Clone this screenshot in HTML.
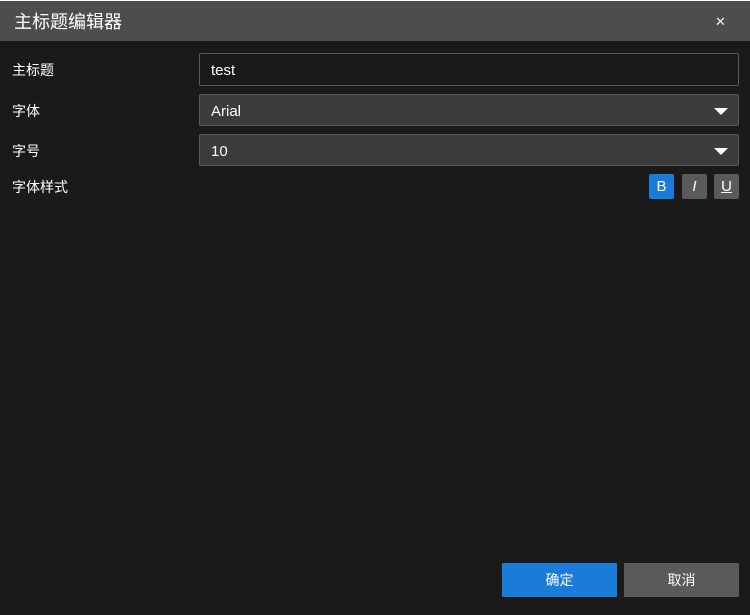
<!DOCTYPE html>
<html><head><meta charset="utf-8"><style>
*{margin:0;padding:0;box-sizing:border-box}
body{width:750px;height:615px;background:#1a1a1a;font-family:"Liberation Sans","Noto Sans CJK SC",sans-serif;color:#fff;position:relative;overflow:hidden}
.top{position:absolute;left:0;top:0;width:750px;height:1px;background:#fff}
.tb{position:absolute;left:0;top:1px;width:750px;height:40px;background:#4d4d4d}
.tb .t{position:absolute;left:14px;top:10px;font-size:18px;line-height:22px}
.tb .x{position:absolute;left:715px;top:14px;font-size:13px;line-height:14px;color:#eee}
.lbl{position:absolute;left:12px;font-size:14px;line-height:18px}
.f{position:absolute;left:199px;width:540px;border:1px solid #5a5a5a;border-radius:2px;font-size:15px;padding-left:11px}
.sel{background:#3c3c3c}
.sel:after{content:"";position:absolute;right:10px;top:13px;border-left:7px solid transparent;border-right:7px solid transparent;border-top:7px solid #fff}
.b{position:absolute;top:174px;width:25px;height:25px;border-radius:2px;background:#5a5a5a;font-size:15px;text-align:center;line-height:25px}
.btn{position:absolute;top:563px;height:34px;width:115px;font-size:14px;text-align:center;line-height:34px;border-radius:1px}
</style></head><body>
<div class="top"></div>
<div class="tb"><div class="t">主标题编辑器</div><div class="x">✕</div></div>
<div class="lbl" style="top:61px">主标题</div>
<div class="f" style="top:53px;height:33px;line-height:33px;background:#1a1a1a">test</div>
<div class="lbl" style="top:102px">字体</div>
<div class="f sel" style="top:94px;height:32px;line-height:33px">Arial</div>
<div class="lbl" style="top:142px">字号</div>
<div class="f sel" style="top:134px;height:32px;line-height:33px">10</div>
<div class="lbl" style="top:178px">字体样式</div>
<div class="b" style="left:649px;background:#1a7bd8">B</div>
<div class="b" style="left:682px;font-style:italic">I</div>
<div class="b" style="left:714px;text-decoration:underline">U</div>
<div class="btn" style="left:502px;background:#1a7bd8">确定</div>
<div class="btn" style="left:624px;background:#5a5a5a">取消</div>
</body></html>
